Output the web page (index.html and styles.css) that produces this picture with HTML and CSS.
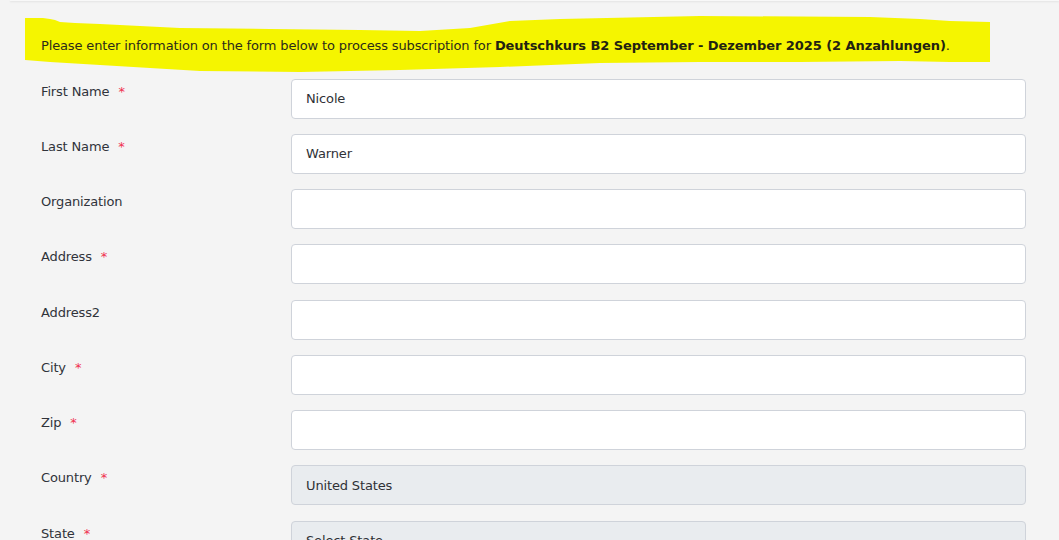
FILE: index.html
```html
<!DOCTYPE html>
<html lang="en">
<head>
<meta charset="utf-8">
<title>Subscription</title>
<link rel="stylesheet" href="styles.css">
</head>
<body>
<div class="topcard"></div>
<main class="page">
  <p class="notice">Please enter information on the form below to process subscription for <strong>Deutschkurs B2 September - Dezember 2025 (2 Anzahlungen)</strong>.</p>
  <form class="form">
    <div class="row"><label class="label">First Name<span class="req">*</span></label><input class="field" type="text" value="Nicole"></div>
    <div class="row"><label class="label">Last Name<span class="req">*</span></label><input class="field" type="text" value="Warner"></div>
    <div class="row"><label class="label">Organization</label><input class="field" type="text" value=""></div>
    <div class="row"><label class="label">Address<span class="req">*</span></label><input class="field" type="text" value=""></div>
    <div class="row"><label class="label">Address2</label><input class="field" type="text" value=""></div>
    <div class="row"><label class="label">City<span class="req">*</span></label><input class="field" type="text" value=""></div>
    <div class="row"><label class="label">Zip<span class="req">*</span></label><input class="field" type="text" value=""></div>
    <div class="row"><label class="label">Country<span class="req">*</span></label><select class="field select"><option>United States</option></select></div>
    <div class="row"><label class="label">State<span class="req">*</span></label><select class="field select"><option>Select State</option></select></div>
  </form>
</main>
</body>
</html>
```
FILE: styles.css
```css
html, body {
  margin: 0;
  padding: 0;
  background: #f4f4f4;
  overflow: hidden;
}
body {
  font-family: "DejaVu Sans", Verdana, sans-serif;
  font-size: 13px;
  letter-spacing: -0.14px;
  color: #2f3136;
}
.topcard {
  height: 1px;
  margin-left: 10px;
  background: #f8f8f8;
  box-shadow: 0 1px 2px rgba(0, 0, 0, 0.10);
  margin-bottom: 1px;
}
.page {
  padding: 0 33px 0 41px;
}
.notice {
  position: relative;
  z-index: 0;
  margin: 35px 0 22.6px;
  line-height: 20px;
  color: #2b2b1a;
}
.notice::before {
  content: "";
  position: absolute;
  z-index: -1;
  left: -16px;
  top: -20px;
  width: 965px;
  height: 57px;
  background: #f5f500;
  clip-path: polygon(0px 2px, 18px 2px, 25px 3px, 30px 4px, 35px 6px, 50px 7px, 75px 8px, 115px 10px, 155px 12px, 245px 13px, 335px 14px, 395px 15px, 445px 12px, 485px 5px, 535px 3px, 675px 0px, 845px 1px, 895px 3px, 925px 5px, 965px 6px, 965px 46px, 925px 46px, 875px 45px, 775px 46px, 675px 46px, 575px 47px, 475px 51px, 375px 54px, 275px 56px, 175px 55px, 75px 49px, 25px 46px, 0px 44px);
}
.notice strong {
  font-weight: bold;
  letter-spacing: -0.07px;
  color: #222211;
}
.form {
  display: flex;
  flex-direction: column;
  gap: 15.25px;
}
.row {
  display: grid;
  grid-template-columns: 250px 1fr;
  align-items: start;
}
.label {
  padding-top: 3px;
  line-height: 20px;
  color: #30333a;
}
.req {
  color: #f0304f;
  margin-left: 9px;
  letter-spacing: 0;
}
.field {
  box-sizing: border-box;
  height: 40px;
  width: 100%;
  margin: 0;
  padding: 0 14px;
  border: 1px solid #cfd3da;
  border-radius: 4px;
  background: #ffffff;
  font-family: "DejaVu Sans", Verdana, sans-serif;
  font-size: 13px;
  letter-spacing: -0.14px;
  color: #2f3136;
  outline: none;
}
.select {
  appearance: none;
  -webkit-appearance: none;
  background: #e9ecef;
}
```
